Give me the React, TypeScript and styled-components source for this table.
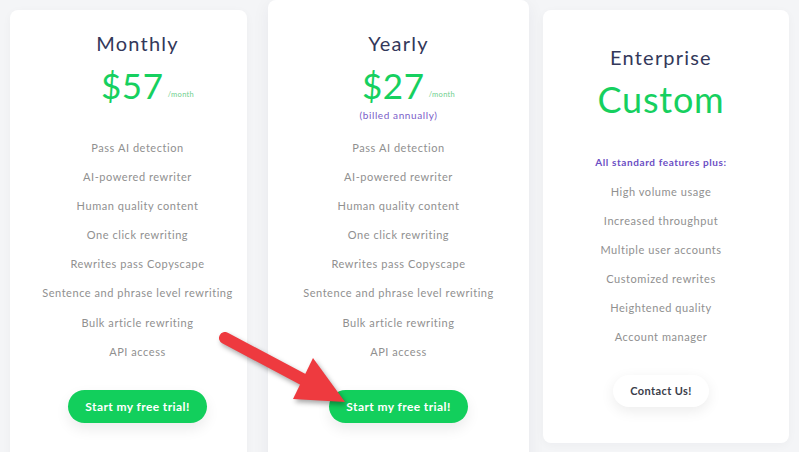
import React from "react";
import styled, { createGlobalStyle } from "styled-components";

const Global = createGlobalStyle`
  html, body { margin: 0; padding: 0; }
  body {
    background: #f4f5f7;
    font-family: "Lato", "Noto Sans", sans-serif;
    overflow: hidden;
  }
`;

const Page = styled.div`
  position: relative;
  width: 799px;
  height: 452px;
  overflow: hidden;
  display: flex;
  align-items: flex-start;
  padding-left: 10px;
  box-sizing: border-box;
`;

const Card = styled.div<{
  $top: number;
  $width: number;
  $height: number;
  $gap: number;
  $pad: number;
  $shiftX: number;
  $raised?: boolean;
}>`
  margin-top: ${(p) => p.$top}px;
  margin-right: ${(p) => p.$gap}px;
  width: ${(p) => p.$width}px;
  height: ${(p) => p.$height}px;
  flex-shrink: 0;
  background: #ffffff;
  border-radius: 8px;
  box-shadow: ${(p) =>
    p.$raised ? "0 4px 18px rgba(30, 40, 70, 0.06)" : "0 2px 10px rgba(30, 40, 70, 0.035)"};
  display: flex;
  flex-direction: column;
  align-items: center;
  padding-top: ${(p) => p.$pad}px;
  padding-left: ${(p) => Math.max(0, p.$shiftX * 2)}px;
  padding-right: ${(p) => Math.max(0, -p.$shiftX * 2)}px;
  box-sizing: border-box;
`;

const Title = styled.div`
  font-size: 20px;
  line-height: 28px;
  letter-spacing: 1.2px;
  color: #33385a;
`;

const PriceBlock = styled.div`
  height: 68px;
  margin-top: 8px;
  display: flex;
  flex-direction: column;
  align-items: center;
`;

const PriceRow = styled.div`
  display: flex;
  align-items: baseline;
  padding-left: 20px;
`;

const Amount = styled.span`
  font-size: 35px;
  line-height: 40px;
  color: #16d05f;
  letter-spacing: 0.6px;
`;

const Per = styled.span`
  font-size: 7.5px;
  color: #6fcf8e;
  margin-left: 4px;
  letter-spacing: 0.3px;
  position: relative;
  top: -2px;
`;

const Note = styled.div`
  font-size: 10px;
  line-height: 14px;
  color: #7a5cc8;
  letter-spacing: 0.6px;
  margin-top: 3px;
`;

const Custom = styled.div`
  font-size: 36px;
  line-height: 44px;
  margin-top: 6px;
  color: #16d05f;
  letter-spacing: 0.8px;
`;

const PlusLabel = styled.div`
  font-size: 10px;
  line-height: 14px;
  margin-top: 34px;
  margin-bottom: 8px;
  color: #6b4ec4;
  font-weight: 700;
  letter-spacing: 0.6px;
`;

const Features = styled.ul`
  list-style: none;
  margin: 0;
  padding: 0;
  display: flex;
  flex-direction: column;
  align-items: center;
`;

const Feature = styled.li`
  font-size: 11px;
  line-height: 29.1px;
  color: #909090;
  letter-spacing: 0.55px;
  white-space: nowrap;
`;

const TrialButton = styled.button`
  margin-top: 24px;
  width: 139px;
  height: 33px;
  border: none;
  border-radius: 17px;
  background: #12cf5c;
  color: #ffffff;
  font-family: inherit;
  font-size: 12px;
  font-weight: 700;
  letter-spacing: 0.4px;
  box-shadow: 0 6px 14px rgba(0, 0, 0, 0.08);
  cursor: pointer;
`;

const ContactButton = styled.button`
  margin-top: 23px;
  width: 96px;
  height: 32px;
  border: none;
  border-radius: 16px;
  background: #ffffff;
  color: #3a3d4a;
  font-family: inherit;
  font-size: 11px;
  font-weight: 700;
  letter-spacing: 0.4px;
  box-shadow: 0 4px 14px rgba(0, 0, 0, 0.08);
  cursor: pointer;
`;

const ArrowLayer = styled.svg`
  position: absolute;
  left: 0;
  top: 0;
  width: 799px;
  height: 452px;
  pointer-events: none;
  filter: drop-shadow(2px 3px 2.5px rgba(0, 0, 0, 0.35));
`;

const baseFeatures = [
  "Pass AI detection",
  "AI-powered rewriter",
  "Human quality content",
  "One click rewriting",
  "Rewrites pass Copyscape",
  "Sentence and phrase level rewriting",
  "Bulk article rewriting",
  "API access",
];

const enterpriseFeatures = [
  "High volume usage",
  "Increased throughput",
  "Multiple user accounts",
  "Customized rewrites",
  "Heightened quality",
  "Account manager",
];

export default function App() {
  return (
    <>
      <Global />
      <Page>
        <Card $top={10} $width={237} $height={460} $gap={21} $pad={19} $shiftX={9}>
          <Title>Monthly</Title>
          <PriceBlock>
            <PriceRow>
              <Amount>$57</Amount>
              <Per>/month</Per>
            </PriceRow>
          </PriceBlock>
          <Features>
            {baseFeatures.map((f) => (
              <Feature key={f}>{f}</Feature>
            ))}
          </Features>
          <TrialButton>Start my free trial!</TrialButton>
        </Card>
        <Card $top={0} $width={261} $height={470} $gap={14} $pad={29} $shiftX={0} $raised>
          <Title>Yearly</Title>
          <PriceBlock>
            <PriceRow>
              <Amount>$27</Amount>
              <Per>/month</Per>
            </PriceRow>
            <Note>(billed annually)</Note>
          </PriceBlock>
          <Features>
            {baseFeatures.map((f) => (
              <Feature key={f}>{f}</Feature>
            ))}
          </Features>
          <TrialButton>Start my free trial!</TrialButton>
        </Card>
        <Card $top={10} $width={246} $height={433} $gap={0} $pad={33} $shiftX={-5}>
          <Title>Enterprise</Title>
          <Custom>Custom</Custom>
          <PlusLabel>All standard features plus:</PlusLabel>
          <Features>
            {enterpriseFeatures.map((f) => (
              <Feature key={f}>{f}</Feature>
            ))}
          </Features>
          <ContactButton>Contact Us!</ContactButton>
        </Card>
        <ArrowLayer viewBox="0 0 799 452">
          <line x1="225" y1="338" x2="306" y2="381" stroke="#ee3a3f" strokeWidth="12" strokeLinecap="round" />
          <polygon points="313,358 293,399 345,402" fill="#ee3a3f" />
        </ArrowLayer>
      </Page>
    </>
  );
}
